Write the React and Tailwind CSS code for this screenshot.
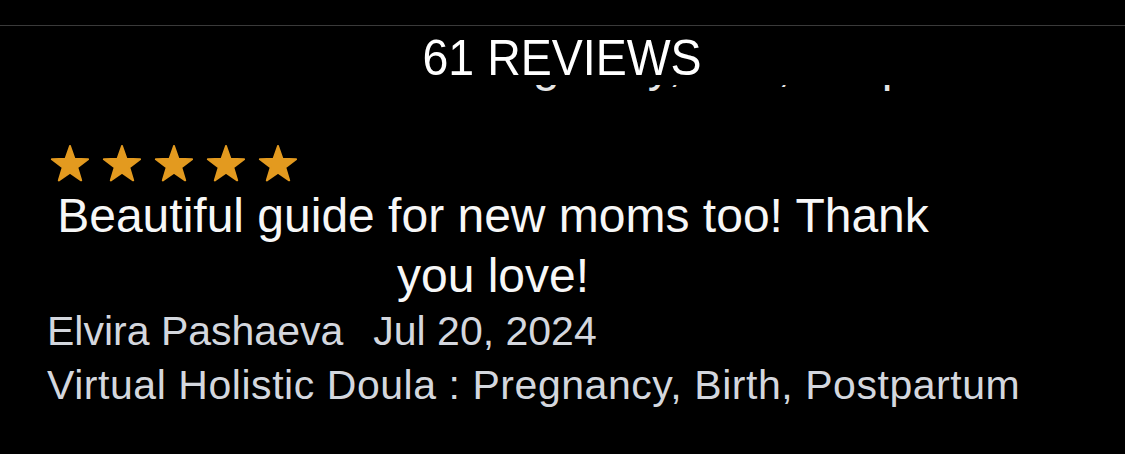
import React from 'react';

const font = { fontFamily: '"Liberation Sans", Arial, sans-serif' };

function starPoints(cx, cy, R, r) {
  const pts = [];
  for (let i = 0; i < 10; i++) {
    const rad = i % 2 === 0 ? R : r;
    const a = (-90 + i * 36) * (Math.PI / 180);
    pts.push(`${(cx + rad * Math.cos(a)).toFixed(2)},${(cy + rad * Math.sin(a)).toFixed(2)}`);
  }
  return pts.join(' ');
}

function Star() {
  return (
    <svg width="40" height="38" viewBox="0 0 40 38" className="shrink-0">
      <polygon
        points={starPoints(20, 20, 19, 7.6)}
        fill="#e39a1f"
        stroke="#e39a1f"
        strokeWidth="2"
        strokeLinejoin="round"
      />
    </svg>
  );
}

export default function App() {
  return (
    <div className="w-[1125px] h-[454px] bg-black overflow-hidden" style={font}>
      <div className="h-[25px]" />
      <div className="border-t border-[#3a3a3a]" />

      {/* header */}
      <div className="pt-[8px] pb-[3px] flex justify-center">
        <h1 className="text-[50px] leading-[48px] text-white scale-x-[0.93] whitespace-nowrap">
          61 REVIEWS
        </h1>
      </div>

      {/* bottom of the previous review, scrolled under the header */}
      <div className="h-[7px] overflow-hidden">
        <div className="flex -mt-[44px] text-[48px] leading-[48px] text-[#e5e5e5] whitespace-pre">
          <span className="ml-[533px]">g</span>
          <span className="ml-[88px]">y,</span>
          <span className="ml-[96px]">,</span>
          <span className="ml-[91px]">p</span>
        </div>
      </div>

      <div className="pl-[47px] mt-[53px]">
        <div className="flex gap-[12px] pl-[3px]">
          <Star />
          <Star />
          <Star />
          <Star />
          <Star />
        </div>
        <p className="w-[892px] mt-[3px] text-center text-[48px] leading-[60px] text-[#f7f7f7]">
          Beautiful guide for new moms too! Thank you love!
        </p>
        <div className="flex gap-[30px] text-[41px] leading-[50px] text-[#d4d7de] whitespace-nowrap">
          <span>Elvira Pashaeva</span>
          <span>Jul 20, 2024</span>
        </div>
        <div className="mt-[4px] text-[41px] leading-[50px] tracking-[0.55px] text-[#d4d7de] whitespace-nowrap">
          Virtual Holistic Doula : Pregnancy, Birth, Postpartum
        </div>
      </div>
    </div>
  );
}
